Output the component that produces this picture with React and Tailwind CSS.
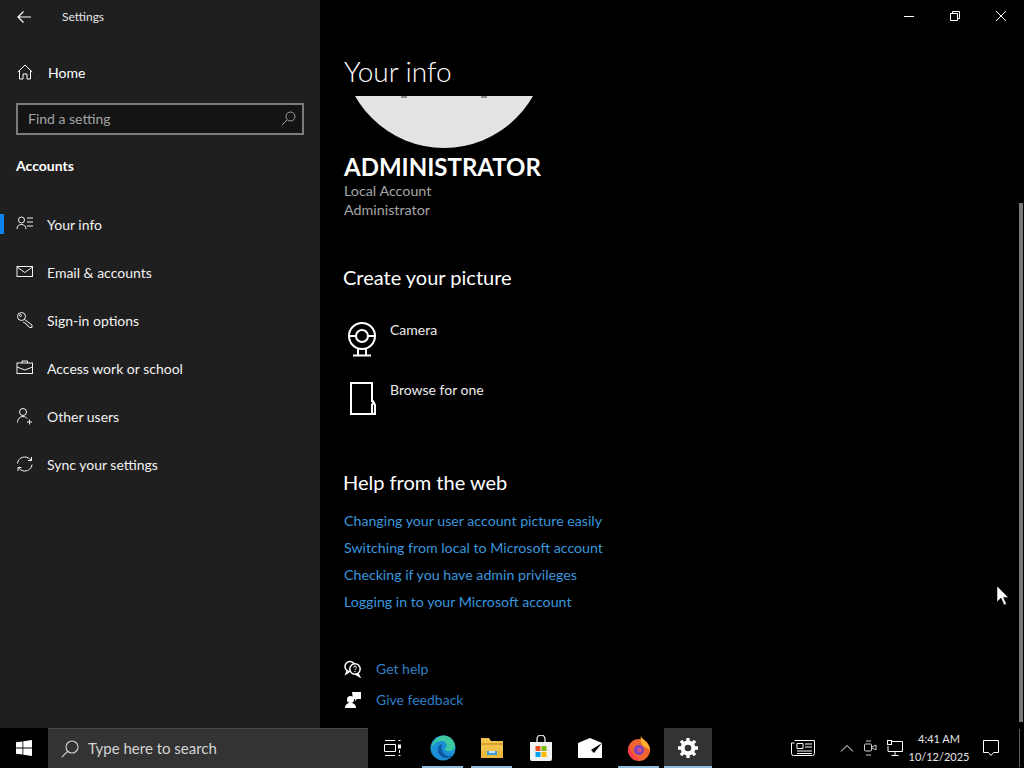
import React from 'react';

const Stroke = ({ size = 18, vb = 18, w = 1, children, className = '' }) => (
  <svg width={size} height={size} viewBox={`0 0 ${vb} ${vb}`} fill="none" stroke="currentColor" strokeWidth={w} className={className}>
    {children}
  </svg>
);

const navItems = [
  {
    label: 'Your info',
    active: true,
    icon: (
      <Stroke>
        <circle cx="5.5" cy="5" r="3" />
        <path d="M1 14c0-3 2-4.5 4.5-4.5S10 11 10 14M11 3h6M11 7h6M11 11h6" />
      </Stroke>
    ),
  },
  {
    label: 'Email & accounts',
    icon: (
      <Stroke>
        <rect x="1" y="3.5" width="15.5" height="10" />
        <path d="M1 4l7.8 5.5L16.5 4" />
      </Stroke>
    ),
  },
  {
    label: 'Sign-in options',
    icon: (
      <Stroke>
        <circle cx="5.5" cy="5.5" r="4" />
        <circle cx="4.5" cy="4.5" r="1" />
        <path d="M8.5 8.5l7.5 5.5v2.5h-2.5l-1-1.5-1.5-.5-.5-1.5-3.5-2" />
      </Stroke>
    ),
  },
  {
    label: 'Access work or school',
    icon: (
      <Stroke>
        <rect x="1" y="4" width="15.5" height="10.5" />
        <path d="M6 4V2h5.5v2M1 8l7.8 3 7.7-3" />
      </Stroke>
    ),
  },
  {
    label: 'Other users',
    icon: (
      <Stroke>
        <circle cx="7" cy="5" r="3.5" />
        <path d="M1.5 15.5c0-3.5 2.5-6 5.500-6 1.800 0 3.300.8 4.300 2.200M13.500 12.500v5M11 15h5" />
      </Stroke>
    ),
  },
  {
    label: 'Sync your settings',
    icon: (
      <Stroke>
        <path d="M1.500 8.500C2 4.500 5 2 8.800 2c2.700 0 4.800 1.200 6.200 3.200M16 9.500c-.5 4-3.500 6.500-7.200 6.500-2.700 0-4.800-1.200-6.200-3.200" />
        <path d="M15.500 2v3.500H12M2 16v-3.500h3.500" />
      </Stroke>
    ),
  },
];

const helpLinks = [
  'Changing your user account picture easily',
  'Switching from local to Microsoft account',
  'Checking if you have admin privileges',
  'Logging in to your Microsoft account',
];

const Sidebar = () => (
  <aside className="w-[320px] shrink-0 bg-[#1f1f1f] text-white">
    <div className="h-[32px] pt-[1px] flex items-center">
      <div className="w-[48px] flex justify-center">
        <Stroke size={16} vb={16} w={1.2}>
          <path d="M15 8H2M7.500 2.500L2 8l5.500 5.500" />
        </Stroke>
      </div>
      <span className="ml-[14px] text-[12px] text-[#e6e6e6]">Settings</span>
    </div>
    <div className="mt-[17px] h-[48px] pb-[2px] flex items-center pl-[17px] text-[14px]">
      <Stroke size={16} vb={16}>
        <path d="M.8 8L8 1l7.200 7M2.500 6.500V15h3.500v-5h4v5h3.500V6.500" />
      </Stroke>
      <span className="ml-[15px]">Home</span>
    </div>
    <div className="mx-[16px] mt-[6px] h-[32px] pb-[2px] border-2 border-[#7b7b7b] bg-[#141414] flex items-center justify-between pl-[10px] pr-[6px] text-[#a3a3a3] text-[14px]">
      <span>Find a setting</span>
      <svg width="15" height="15" viewBox="0 0 15 15" fill="none" stroke="currentColor" strokeWidth="1">
        <circle cx="9.500" cy="5.500" r="4.500" />
        <path d="M6 9l-5 5" />
      </svg>
    </div>
    <div className="mt-[21px] pl-[16px] text-[14px] font-bold leading-[20px]">Accounts</div>
    <nav className="mt-[24px]">
      {navItems.map((item) => (
        <div key={item.label} className="relative h-[48px] flex items-center pl-[16px] text-[14px] text-[#f2f2f2]">
          {item.active && <span className="absolute left-0 top-[14px] h-[20px] w-[4px] bg-[#0a84e8]" />}
          <span className="w-[31px] shrink-0 flex">{item.icon}</span>
          <span>{item.label}</span>
        </div>
      ))}
    </nav>
  </aside>
);

const Content = () => (
  <main className="relative flex-1 bg-black text-white overflow-hidden pl-[24px]">
    <div className="absolute right-0 top-0 flex h-[32px] text-white">
      {/* window controls */}
      <div className="w-[46px] flex items-center justify-center">
        <span className="block w-[10px] h-px bg-white" />
      </div>
      <div className="w-[46px] flex items-center justify-center">
        <svg width="10" height="10" viewBox="0 0 10 10" fill="none" stroke="white">
          <path d="M.5 2.500h7v7h-7zM2.500 2.500v-2h7v7h-2" />
        </svg>
      </div>
      <div className="w-[46px] flex items-center justify-center">
        <svg width="12" height="12" viewBox="0 0 12 12" fill="none" stroke="white">
          <path d="M1 1l10 10M11 1L1 11" />
        </svg>
      </div>
    </div>

    <h1 className="pt-[51px] text-[28px] leading-[40px] font-light">Your info</h1>

    <div className="mt-[5px] h-[52px] overflow-hidden">
      <div className="relative ml-[-2px] mt-[-152px] w-[204px] h-[204px] rounded-full bg-[#e3e3e3]">
        <span className="absolute left-[59px] top-[152px] w-[6px] h-[2px] bg-[#8a8a8a]" />
        <span className="absolute left-[139px] top-[152px] w-[6px] h-[2px] bg-[#8a8a8a]" />
      </div>
    </div>

    <div className="mt-[5px] text-[24px] leading-[28px] font-bold">ADMINISTRATOR</div>
    <div className="text-[14.300px] leading-[19px] text-[#a6a6a6]">
      <div>Local Account</div>
      <div>Administrator</div>
    </div>

    <h2 className="mt-[44px] ml-[-1px] text-[20px] leading-[28px]">Create your picture</h2>

    <div className="mt-[29px] h-[60px] flex">
      <svg width="32" height="36" viewBox="0 0 32 36" fill="none" stroke="white" strokeWidth="2" className="ml-[3px] mt-[2px]">
        <circle cx="15" cy="14" r="13" />
        <circle cx="15" cy="14" r="6" />
        <path d="M2 14h7M21 14h7M11 27v6M19 27v6M6 33.500h18" />
      </svg>
      <span className="ml-[11px] text-[14px] leading-[20px] text-[#ececec]">Camera</span>
    </div>
    <div className="h-[60px] flex">
      <svg width="26" height="34" viewBox="0 0 26 34" fill="none" stroke="white" strokeWidth="2" className="ml-[6px] mt-[2px]">
        <path d="M22 20V1H1v31h24V23l-1.500-3-1.500 3v9" />
      </svg>
      <span className="ml-[14px] text-[14px] leading-[20px] text-[#ececec]">Browse for one</span>
    </div>

    <h2 className="mt-[28px] ml-[-1px] text-[20px] leading-[28px]">Help from the web</h2>
    <div className="mt-[11px] flex flex-col text-[14.200px] leading-[27px] text-[#3a96dd]">
      {helpLinks.map((l) => (
        <span key={l}>{l}</span>
      ))}
    </div>

    <div className="mt-[38px] h-[31px] flex items-center text-[14px] text-[#2f7fc4]">
      <svg width="18" height="18" viewBox="0 0 18 18" fill="none" stroke="white" strokeWidth="1.500" className="shrink-0">
        <circle cx="6" cy="6.500" r="5" />
        <path d="M3 11l-1 3 3-2" />
        <circle cx="11" cy="9" r="5.200" fill="black" />
        <path d="M14 13.500l1.500 3-4-2.500" />
        <path d="M9.500 7.500c0-1.800 3-1.800 3 0 0 1.200-1.500 1-1.500 2.300" strokeWidth="1" />
        <circle cx="11" cy="11.500" r=".7" fill="white" stroke="none" />
      </svg>
      <span className="ml-[14px]">Get help</span>
    </div>
    <div className="h-[31px] flex items-center text-[14px] text-[#2f7fc4]">
      <svg width="18" height="18" viewBox="0 0 18 18" fill="white" className="shrink-0">
        <circle cx="6.500" cy="8.500" r="3.500" />
        <path d="M1 17c0-3 2-5 5.500-5s5.500 2 5.500 5z" />
        <path d="M8 1h9v7h-4l-2 2V8H9z" />
      </svg>
      <span className="ml-[14px]">Give feedback</span>
    </div>

    {/* scrollbar */}
    <span className="absolute right-[1px] top-[203px] h-[519px] w-[4px] bg-[#7a7a7a]" />

    {/* mouse cursor */}
    <svg width="13" height="20" viewBox="0 0 13 20" className="absolute left-[676px] top-[586px]">
      <path d="M1 0v16l4-4 3 7 2.500-1-3-6.500H12.500z" fill="white" stroke="black" strokeWidth="0.500" />
    </svg>
  </main>
);

const Edge = () => (
  <svg width="26" height="26" viewBox="0 0 26 26">
    <circle cx="13" cy="13" r="12.500" fill="#1b8fd6" />
    <path d="M1 14C2 6 8 .5 14 .5c6 0 11 5 11 11 0 3-3 4.500-6 4.500-2.500 0-4-.8-4-1.800 0-1.500 1.800-1.200 1.800-3.500C16.800 8 14.500 6 11.500 6 6.500 6 2.500 9.500 1 14z" fill="#3cc9a0" />
    <path d="M12 9c-3 1-4.500 4-4 7 .6 4 4 7 8 7 3 0 5-1 7-3-2 1-5 1.500-7.500 0-3-1.800-4.800-6.500-3.500-11z" fill="#0c59a4" />
  </svg>
);

const Explorer = () => (
  <svg width="22" height="20" viewBox="0 0 22 20">
    <path d="M0 0h8l2 3h12v17H0z" fill="#f2c44d" />
    <rect x="0" y="5" width="22" height="2" fill="#d9a32e" />
    <path d="M0 13h22v7H0z" fill="#e8b93f" />
    <path d="M6 13h10v4H6z" fill="#3f9be0" />
    <path d="M8 13h6v2H8z" fill="#bfe3fa" />
  </svg>
);

const Store = () => (
  <svg width="24" height="26" viewBox="0 0 24 26">
    <path d="M8 7V4a4 4 0 018 0v3" fill="none" stroke="#e6e6e6" strokeWidth="1.300" />
    <path d="M1 7h22v17a2 2 0 01-2 2H3a2 2 0 01-2-2z" fill="#f2f2f2" />
    <rect x="6.500" y="11" width="5" height="5" fill="#f25022" />
    <rect x="12.500" y="11" width="5" height="5" fill="#7fba00" />
    <rect x="6.500" y="17" width="5" height="5" fill="#00a4ef" />
    <rect x="12.500" y="17" width="5" height="5" fill="#ffb900" />
  </svg>
);

const Mail = () => (
  <svg width="24" height="20" viewBox="0 0 24 20">
    <path d="M0 5L12 0l12 5v15H0z" fill="white" />
    <path d="M0 6l13 6 11-7-8 10-3-3z" fill="black" />
  </svg>
);

const Firefox = () => (
  <svg width="24" height="26" viewBox="0 0 24 26">
    <circle cx="12" cy="15" r="11" fill="#f0652f" />
    <path d="M14 1c1 3 4 4 6 7 2 3 3 5 3 8-2-3-5-4-7-5-2-2-3-6-2-10z" fill="#ffb02e" />
    <path d="M2 11c2 6 6 12 12 14-7 1-12-3-13-9 0-2 0-3 1-5z" fill="#ff3d4f" />
    <circle cx="12" cy="15" r="5" fill="#7a3fc2" />
    <circle cx="12.500" cy="15" r="2.500" fill="#c94a8a" />
  </svg>
);

const Gear = () => (
  <svg width="20" height="20" viewBox="0 0 24 24" fill="none" stroke="white" strokeWidth="5">
    <circle cx="12" cy="12" r="6.500" />
    <path d="M12 0v5M12 19v5M0 12h5M19 12h5M3.500 3.500L7 7M17 17l3.500 3.500M20.500 3.500L17 7M7 17l-3.500 3.500" strokeWidth="4" />
  </svg>
);

const TaskSlot = ({ children, running, active, className = 'w-[49px]' }) => (
  <div className={`relative h-full flex items-center justify-center ${className} ${active ? 'bg-[#333333]' : ''}`}>
    {children}
    {running && (
      <span className={`absolute bottom-0 h-[2px] bg-[#8fbbdc] ${active ? 'inset-x-0' : 'inset-x-[4px]'}`} />
    )}
  </div>
);

const Taskbar = () => (
  <footer className="h-[40px] bg-black flex text-white shrink-0">
    <div className="w-[48px] flex items-center justify-center">
      <svg width="16" height="16" viewBox="0 0 16 16" fill="white">
        <path d="M0 2.300l6.500-.9v6.200H0zM7.300 1.300L16 0v7.600H7.300zM0 8.400h6.500v6.200L0 13.700zM7.300 8.400H16V16l-8.700-1.200z" />
      </svg>
    </div>
    <div className="w-[320px] bg-[#333333] border-t border-[#4a4a4a] flex items-center pl-[13px] text-[15px] text-[#d4d4d4]">
      <svg width="18" height="18" viewBox="0 0 18 18" fill="none" stroke="#d4d4d4" strokeWidth="1.100">
        <circle cx="11" cy="7" r="6" />
        <path d="M6.500 11.500L.8 17.200" />
      </svg>
      <span className="ml-[9px]">Type here to search</span>
    </div>
    <TaskSlot>
      <svg width="18" height="16" viewBox="0 0 18 16" fill="none" stroke="white">
        <path d="M1 .5h10M1 15.500h10M.5 4.500h11v7H.5zM14.500 .5h2M14.500 15.500h2" />
        <rect x="14" y="4.500" width="3" height="4" fill="white" stroke="none" />
        <path d="M15.500 10v3" />
      </svg>
    </TaskSlot>
    <TaskSlot running className="w-[49px] ml-[1px]"><Edge /></TaskSlot>
    <TaskSlot running><Explorer /></TaskSlot>
    <TaskSlot><Store /></TaskSlot>
    <TaskSlot><Mail /></TaskSlot>
    <TaskSlot running><Firefox /></TaskSlot>
    <TaskSlot running active className="w-[48px] ml-[1px]"><Gear /></TaskSlot>

    <div className="ml-auto flex items-center h-full">
      <svg width="24" height="16" viewBox="0 0 24 16" fill="none" stroke="white">
        <path d="M3.500 .5h20v13a2 2 0 01-2 2h-19a2 2 0 01-2-2V3h3M6 3.500h6v5H6zM14 4h7M14 7h7M6 11h15M6 13.500h15" />
      </svg>
      <svg width="14" height="8" viewBox="0 0 14 8" fill="none" stroke="white" className="ml-[25px]">
        <path d="M1 7.500l6-6 6 6" />
      </svg>
      <svg width="13" height="16" viewBox="0 0 13 16" fill="none" stroke="#d0d0d0" className="ml-[10px]">
        <rect x=".5" y="4" width="7" height="7" rx="1" />
        <path d="M8 7l4-2v5L8 8M2 1h5M2 15h5" />
      </svg>
      <svg width="16" height="16" viewBox="0 0 16 16" fill="none" stroke="white" className="ml-[10px]">
        <path d="M4 1.500h11.500v10H1V6M8 12v3M4.500 15.500h7" />
        <rect x=".5" y=".5" width="4" height="4" />
      </svg>
      <div className="w-[70px] ml-[1px] text-center text-[11px] leading-[18px] text-[#e6e6e6]">
        <div>4:41 AM</div>
        <div>10/12/2025</div>
      </div>
      <svg width="16" height="16" viewBox="0 0 16 16" fill="none" stroke="white" className="ml-[9px]">
        <path d="M.5 .5h15v12h-5L8 15.500 5.500 12.500h-5z" />
      </svg>
      <div className="w-[25px] h-full pl-[20px]">
        <span className="block mt-[1px] w-px h-[38px] bg-[#5f5f5f]" />
      </div>
    </div>
  </footer>
);

export default function App() {
  return (
    <div className="w-[1024px] h-[768px] flex flex-col overflow-hidden bg-black font-['Lato','Open_Sans',sans-serif]">
      <div className="flex-1 flex min-h-0">
        <Sidebar />
        <Content />
      </div>
      <Taskbar />
    </div>
  );
}
